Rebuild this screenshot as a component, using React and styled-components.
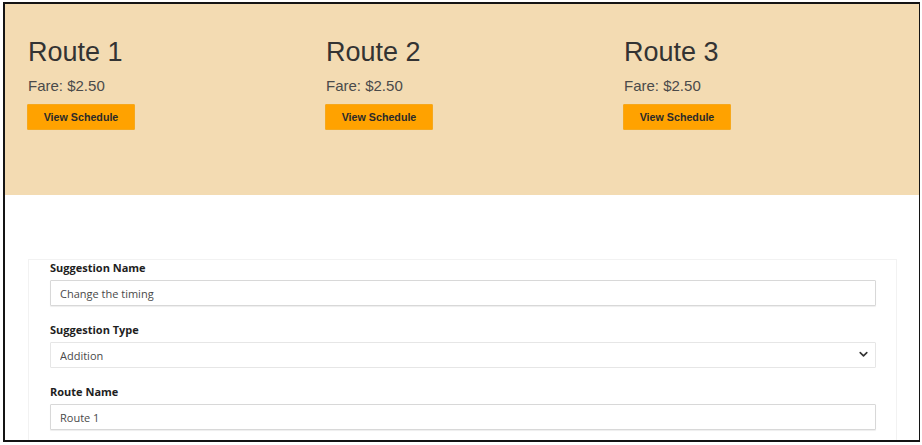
import React from "react";
import styled, { createGlobalStyle } from "styled-components";

const GlobalStyle = createGlobalStyle`
  html, body {
    margin: 0;
    padding: 0;
    background: #ffffff;
  }
  * {
    box-sizing: border-box;
  }
`;

const Frame = styled.div`
  margin: 2px 0 0 3px;
  width: 917px;
  height: 440px;
  border: 2px solid #141414;
  border-right-width: 1.5px;
  overflow: hidden;
  background: #ffffff;
`;

const Header = styled.header`
  background: #f3dbb2;
  height: 191px;
  padding: 32px 0 0 23px;
  display: grid;
  grid-template-columns: repeat(3, 298px);
  align-items: start;
  font-family: "Liberation Sans", Arial, sans-serif;
`;

const RouteCard = styled.div`
  display: flex;
  flex-direction: column;
  align-items: flex-start;
`;

const RouteTitle = styled.h2`
  margin: 0;
  font-size: 27px;
  line-height: 32px;
  font-weight: 400;
  color: #333333;
`;

const Fare = styled.p`
  margin: 8px 0 0;
  font-size: 15px;
  line-height: 20px;
  color: #4a4a4a;
`;

const ScheduleButton = styled.button`
  margin: 8px 0 0 -1px;
  width: 108px;
  height: 26px;
  padding: 0;
  border: 1px solid #f6a81c;
  border-radius: 1px;
  background: #ffa200;
  color: #2a2a2a;
  font-family: "Liberation Sans", Arial, sans-serif;
  font-size: 10.7px;
  font-weight: 700;
  cursor: pointer;
`;

const Main = styled.main`
  padding: 64px 22px 0 23px;
`;

const FormCard = styled.form`
  border: 1px solid #f2f2f2;
  padding: 1px 20px 0 21px;
  font-family: "Open Sans", "Noto Sans", sans-serif;
`;

const Field = styled.div`
  display: flex;
  flex-direction: column;
  margin-bottom: 17px;
`;

const Label = styled.label`
  font-size: 11px;
  line-height: 14px;
  font-weight: 700;
  color: #1e1e1e;
  margin-bottom: 5px;
`;

const TextInput = styled.input`
  height: 26px;
  border: 1px solid #d8d8d8;
  border-radius: 1px;
  box-shadow: 0 1px 1px rgba(0, 0, 0, 0.07);
  padding: 0 9px;
  font-family: "Open Sans", "Noto Sans", sans-serif;
  font-size: 11px;
  color: #4a4a4a;
  background: #ffffff;
  outline: none;
`;

const SelectWrap = styled.div`
  position: relative;
`;

const Select = styled.select`
  width: 100%;
  height: 26px;
  border: 1px solid #e6e6e6;
  border-radius: 1px;
  padding: 0 9px;
  font-family: "Open Sans", "Noto Sans", sans-serif;
  font-size: 11px;
  color: #4a4a4a;
  background: #ffffff;
  appearance: none;
  outline: none;
`;

const Chevron = styled.svg`
  position: absolute;
  right: 8px;
  top: 9px;
  width: 9px;
  height: 7px;
  pointer-events: none;
`;

const Input = ({ label, value }) => (
  <Field>
    <Label>{label}</Label>
    <TextInput defaultValue={value} />
  </Field>
);

const Dropdown = ({ label, value, options }) => (
  <Field>
    <Label>{label}</Label>
    <SelectWrap>
      <Select defaultValue={value}>
        {options.map(o => (
          <option key={o}>{o}</option>
        ))}
      </Select>
      <Chevron viewBox="0 0 9 7">
        <path
          d="M1.2 1.6 L4.5 4.9 L7.8 1.6"
          fill="none"
          stroke="#333"
          strokeWidth="1.6"
          strokeLinecap="round"
          strokeLinejoin="round"
        />
      </Chevron>
    </SelectWrap>
  </Field>
);

const routes = [
  { name: "Route 1", fare: "$2.50" },
  { name: "Route 2", fare: "$2.50" },
  { name: "Route 3", fare: "$2.50" }
];

export default function App() {
  return (
    <>
      <GlobalStyle />
      <Frame>
        <Header>
          {routes.map(r => (
            <RouteCard key={r.name}>
              <RouteTitle>{r.name}</RouteTitle>
              <Fare>Fare: {r.fare}</Fare>
              <ScheduleButton>View Schedule</ScheduleButton>
            </RouteCard>
          ))}
        </Header>
        <Main>
          <FormCard>
            <Input label="Suggestion Name" value="Change the timing" />
            <Dropdown
              label="Suggestion Type"
              value="Addition"
              options={["Addition", "Removal", "Change"]}
            />
            <Input label="Route Name" value="Route 1" />
          </FormCard>
        </Main>
      </Frame>
    </>
  );
}
